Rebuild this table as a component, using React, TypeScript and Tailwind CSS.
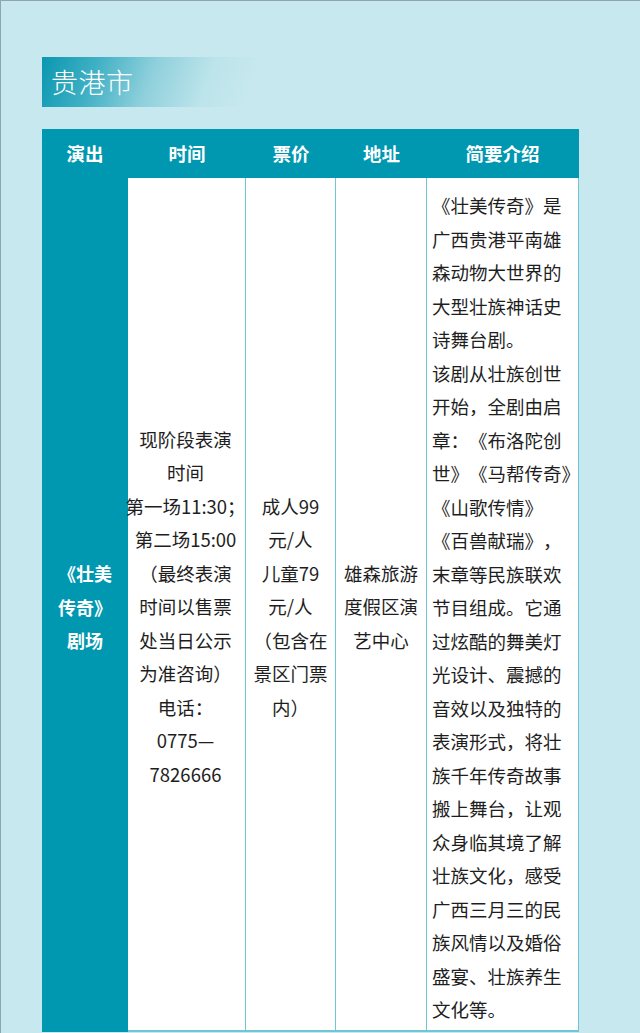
const font = { fontFamily: '"Noto Sans CJK SC", "Noto Sans", sans-serif' }

const timeLines = [
  '现阶段表演',
  '时间',
  '第一场11:30；',
  '第二场15:00',
  '（最终表演',
  '时间以售票',
  '处当日公示',
  '为准咨询）',
  '电话：',
  '0775—',
  '7826666',
]

const priceLines = ['成人99', '元/人', '儿童79', '元/人', '（包含在', '景区门票', '内）']

const placeLines = ['雄森旅游', '度假区演', '艺中心']

const introLines = [
  '《壮美传奇》是',
  '广西贵港平南雄',
  '森动物大世界的',
  '大型壮族神话史',
  '诗舞台剧。',
  '该剧从壮族创世',
  '开始，全剧由启',
  '章：《布洛陀创',
  '世》《马帮传奇》',
  '《山歌传情》',
  '《百兽献瑞》，',
  '末章等民族联欢',
  '节目组成。它通',
  '过炫酷的舞美灯',
  '光设计、震撼的',
  '音效以及独特的',
  '表演形式，将壮',
  '族千年传奇故事',
  '搬上舞台，让观',
  '众身临其境了解',
  '壮族文化，感受',
  '广西三月三的民',
  '族风情以及婚俗',
  '盛宴、壮族养生',
  '文化等。',
]

function Lines({ lines, className = '' }: { lines: string[]; className?: string }) {
  return (
    <div className={className}>
      {lines.map((l, i) => (
        <div key={i} className="whitespace-nowrap">
          {l}
        </div>
      ))}
    </div>
  )
}

export default function App() {
  const headers = [
    { label: '演出', w: 'w-[86px]' },
    { label: '时间', w: 'w-[118px]' },
    { label: '票价', w: 'w-[90px]' },
    { label: '地址', w: 'w-[91px]' },
    { label: '简要介绍', w: 'w-[151px]' },
  ]

  return (
    <div
      className="w-[640px] h-[1033px] overflow-hidden bg-[#c6e8ee] border-t border-l border-[#8fa6ab] pt-[56px] pl-[41px] [text-spacing-trim:space-all]"
      style={font}
    >
      <div className="w-[240px] h-[50px] flex items-center pl-[9px] bg-[linear-gradient(110deg,#0a97b0_0%,#3fb0c4_22%,#8fd0dc_45%,#bde4eb_68%,#c6e8ee_85%)]">
        <span className="text-white text-[27px] font-light tracking-[0.5px]">贵港市</span>
      </div>

      <div className="mt-[22px] w-[537px]">
        <div className="flex h-[49px] bg-[#0097b1] items-center">
          {headers.map((h) => (
            <div key={h.label} className={`${h.w} text-center text-white text-[18.5px] font-bold`}>
              {h.label}
            </div>
          ))}
        </div>

        <div className="flex text-[18.5px] leading-[33.5px] text-[#1e1e1e]">
          <div className="w-[86px] bg-[#0097b1] flex items-center justify-center pt-[7px] font-bold text-white text-[18px] border-b-2 border-[#0097b1]">
            <Lines lines={['《壮美', '传奇》', '剧场']} className="text-center" />
          </div>
          <div className="w-[118px] bg-white flex items-center justify-center pt-[6px] border-r border-b-2 border-[#6fc6d5]">
            <Lines lines={timeLines} className="text-center -ml-[2px]" />
          </div>
          <div className="w-[90px] bg-white flex items-center justify-center pt-[6px] border-r border-b-2 border-[#6fc6d5]">
            <Lines lines={priceLines} className="text-center" />
          </div>
          <div className="w-[91px] bg-white flex items-center justify-center pt-[6px] border-r border-b-2 border-[#6fc6d5]">
            <Lines lines={placeLines} className="text-center" />
          </div>
          <div className="w-[152px] bg-white pl-[5px] pt-[11px] pb-[3px] border-r border-b-2 border-[#6fc6d5]">
            <Lines lines={introLines} />
          </div>
        </div>
      </div>
    </div>
  )
}
